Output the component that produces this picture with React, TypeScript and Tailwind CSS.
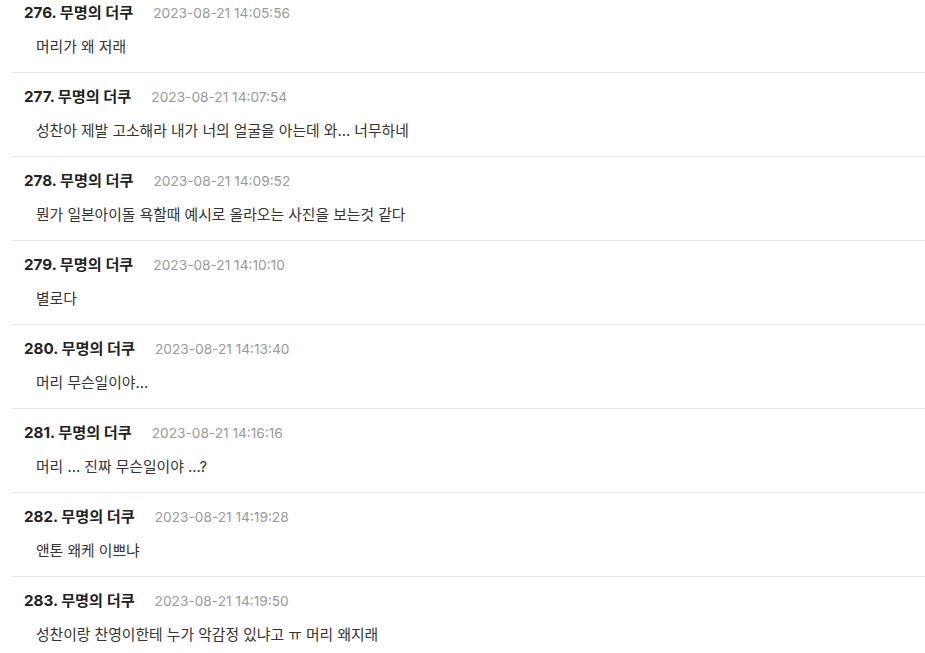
import React from "react";

const items = [
  { n: 276, t: "2023-08-21 14:05:56", c: "머리가 왜 저래" },
  { n: 277, t: "2023-08-21 14:07:54", c: "성찬아 제발 고소해라 내가 너의 얼굴을 아는데 와... 너무하네" },
  { n: 278, t: "2023-08-21 14:09:52", c: "뭔가 일본아이돌 욕할때 예시로 올라오는 사진을 보는것 같다" },
  { n: 279, t: "2023-08-21 14:10:10", c: "별로다" },
  { n: 280, t: "2023-08-21 14:13:40", c: "머리 무슨일이야..." },
  { n: 281, t: "2023-08-21 14:16:16", c: "머리 ... 진짜 무슨일이야 ...?" },
  { n: 282, t: "2023-08-21 14:19:28", c: "앤톤 왜케 이쁘냐" },
  { n: 283, t: "2023-08-21 14:19:50", c: "성찬이랑 찬영이한테 누가 악감정 있냐고 ㅠ 머리 왜지래" },
];

export default function App() {
  return (
    <div
      className="w-[925px] h-[653px] overflow-hidden bg-white"
      style={{ fontFamily: 'Inter, "Noto Sans CJK KR", "Noto Sans", sans-serif' }}
    >
      <div className="-mt-[11px] pl-[12px]">
        {items.map((it) => (
          <div key={it.n} className="border-b border-[#e6e6e6] pt-[14px] pb-[15px]">
            <div className="flex items-center pl-[12px] h-[20px]">
              <span className="text-[15.2px] font-bold text-[#222]">
                {it.n}. 무명의 더쿠
              </span>
              <span className="ml-[20px] text-[13.7px] text-[#999]">{it.t}</span>
            </div>
            <div className="mt-[14px] pl-[24px] h-[20px] flex items-center text-[14.8px] text-[#333]">
              {it.c}
            </div>
          </div>
        ))}
      </div>
    </div>
  );
}
